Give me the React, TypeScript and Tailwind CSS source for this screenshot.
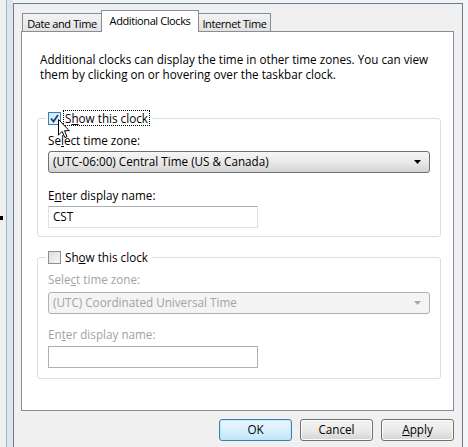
import type { ReactNode } from "react";

const TABS = [
  { label: "Date and Time", width: "w-[80px]" },
  { label: "Additional Clocks", width: "w-[98px]" },
  { label: "Internet Time", width: "w-[73px]" },
];

function Tab({ label, width, active }: { label: string; width: string; active: boolean }) {
  if (active) {
    return (
      <div
        className={`relative z-10 -mx-[1px] flex h-[22px] justify-center border border-b-0 border-[#898c95] bg-white pt-[2px] text-[11px] tracking-[-0.4px] ${width}`}
      >
        {label}
      </div>
    );
  }
  return (
    <div
      className={`flex h-[19px] justify-center border border-b-0 border-[#898c95] bg-gradient-to-b from-[#f3f3f3] to-[#e1e1e1] pt-[2px] text-[11px] tracking-[-0.4px] ${width}`}
    >
      {label}
    </div>
  );
}

function Checkbox({ checked, hover }: { checked?: boolean; hover?: boolean }) {
  return (
    <span
      className={
        hover
          ? "flex h-[13px] w-[13px] items-center justify-center border border-[#3c7fb1] bg-gradient-to-br from-[#cfe7fa] to-[#eaf6fd]"
          : "flex h-[13px] w-[13px] items-center justify-center border border-[#8f8f8f] bg-gradient-to-br from-[#dcdcdc] to-[#f6f6f6]"
      }
    >
      {checked && (
        <svg width="9" height="9" viewBox="0 0 9 9">
          <path d="M1 4.5 L3.5 7.5 L8 1" fill="none" stroke="#213f72" strokeWidth="1.8" />
        </svg>
      )}
    </span>
  );
}

function Arrow({ disabled }: { disabled?: boolean }) {
  return (
    <svg width="7" height="4" viewBox="0 0 7 4">
      <path d="M0 0 H7 L3.5 4 Z" fill={disabled ? "#a8a8a8" : "#000"} />
    </svg>
  );
}

function Group({ legend, children }: { legend: ReactNode; children: ReactNode }) {
  return (
    <fieldset className="ml-[15px] w-[404px] rounded-[3px] border border-[#d5dfe5] px-[10px]">
      <legend className="-ml-[2px] px-[2px]">{legend}</legend>
      {children}
    </fieldset>
  );
}

function ClockGroup({ enabled }: { enabled: boolean }) {
  const text = enabled ? "text-black" : "text-[#a3a3a3]";
  return (
    <Group
      legend={
        <div className="flex h-[16px] items-center gap-[2px]">
          <Checkbox checked={enabled} hover={enabled} />
          <span
            className={
              enabled
                ? "border border-dotted border-black px-[1px] leading-[14px]"
                : "border border-transparent px-[1px] leading-[14px]"
            }
          >
            {enabled ? (
              <>
                S<u>h</u>ow this clock
              </>
            ) : (
              <>
                Sh<u>o</u>w this clock
              </>
            )}
          </span>
        </div>
      }
    >
      <div className={`mt-[7px] leading-[15px] ${text}`}>
        {enabled ? (
          <>
            Se<u>l</u>ect time zone:
          </>
        ) : (
          <>
            Sele<u>c</u>t time zone:
          </>
        )}
      </div>
      <div
        className={
          enabled
            ? "mt-[3px] flex h-[22px] w-[382px] items-center justify-between rounded-[3px] border border-[#707070] bg-gradient-to-b from-[#f6f6f6] via-[#e9e9e9] to-[#d3d3d3] pl-[4px] pr-[8px]"
            : "mt-[5px] flex h-[22px] w-[382px] items-center justify-between rounded-[3px] border border-[#adb2b5] bg-[#f4f4f4] pl-[4px] pr-[8px] text-[#a3a3a3]"
        }
      >
        <span>{enabled ? "(UTC-06:00) Central Time (US & Canada)" : "(UTC) Coordinated Universal Time"}</span>
        <Arrow disabled={!enabled} />
      </div>
      <div className={`${enabled ? "mt-[15px]" : "mt-[13px]"} leading-[15px] ${text}`}>
        {enabled ? (
          <>
            E<u>n</u>ter display name:
          </>
        ) : (
          <>
            En<u>t</u>er display name:
          </>
        )}
      </div>
      <div
        className={
          enabled
            ? "mb-[8px] mt-[3px] flex h-[22px] w-[210px] items-center border border-[#abadb3] border-b-[#dbdfe6] border-l-[#e2e3ea] border-r-[#dbdfe6] bg-white px-[4px]"
            : "mb-[10px] mt-[4px] flex h-[22px] w-[210px] items-center border border-[#b0b0b0] bg-white px-[4px]"
        }
      >
        {enabled ? "CST" : ""}
      </div>
    </Group>
  );
}

function Button({ children, primary }: { children: ReactNode; primary?: boolean }) {
  return (
    <div
      className={
        primary
          ? "flex h-[22px] w-[73px] items-center justify-center rounded-[3px] border border-[#3c7fb1] bg-gradient-to-b from-[#eaf6fd] via-[#d9f0fc] to-[#bee6fd] shadow-[inset_0_0_0_1px_#c4e5f6]"
          : "flex h-[22px] w-[73px] items-center justify-center rounded-[3px] border border-[#707070] bg-gradient-to-b from-[#f2f2f2] via-[#ebebeb] to-[#d4d4d4] shadow-[inset_0_0_0_1px_#fcfcfc]"
      }
    >
      {children}
    </div>
  );
}

export default function App() {
  return (
    <div className="relative flex h-[447px] w-[468px] overflow-hidden bg-[#f1f4f7] font-['Open_Sans','Noto_Sans',sans-serif] text-[11.7px] text-black">
      <div className="w-[6px] shrink-0 bg-[#eef1f4]" />
      <div className="w-[7px] shrink-0 border-l border-[#a9b4bf] bg-[#dbe5ef]" />
      <div className="mt-[3px] flex w-[450px] shrink-0 flex-col border-l border-r border-t border-[#6f7b87] bg-[#f0f0f0] pl-[7px] pr-[8px] pt-[6px]">
        <div className="-mb-[1px] flex h-[22px] items-end pl-[1px]">
          {TABS.map((t) => (
            <Tab key={t.label} label={t.label} width={t.width} active={t.label === "Additional Clocks"} />
          ))}
        </div>
        <div className="flex h-[380px] flex-col border border-[#898c95] bg-white">
          <p className="ml-[18px] mt-[20px] leading-[15px]">
            Additional clocks can display the time in other time zones. You can view
            <br />
            them by clicking on or hovering over the taskbar clock.
          </p>
          <div className="mt-[28px]">
            <ClockGroup enabled />
          </div>
          <div className="mt-[12px]">
            <ClockGroup enabled={false} />
          </div>
        </div>
        <div className="mt-[8px] flex justify-end gap-[8px]">
          <Button primary>OK</Button>
          <Button>Cancel</Button>
          <Button>
            <u>A</u>pply
          </Button>
        </div>
      </div>
      <div className="w-[5px] shrink-0 bg-[#f3f5f8]" />
      <div className="absolute left-0 top-[216px] h-[4px] w-[3px] bg-black" />
      <svg className="absolute left-[58px] top-[119px]" width="13" height="20" viewBox="0 0 13 20">
        <path d="M0.5 0.5 V16 L4.2 12.4 L6.8 18.5 L9 17.6 L6.5 11.7 H11.3 Z" fill="#fff" stroke="#000" strokeWidth="1" />
      </svg>
    </div>
  );
}
